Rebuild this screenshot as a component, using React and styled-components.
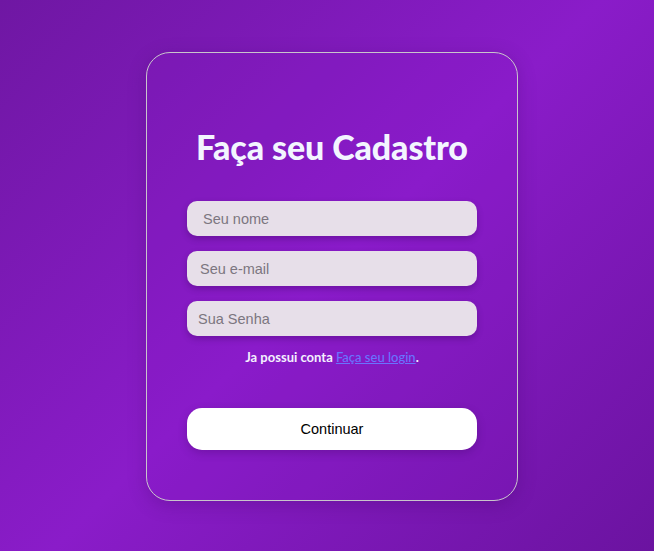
import React, { useState } from "react";
import styled, { createGlobalStyle } from "styled-components";

const GlobalStyle = createGlobalStyle`
  * {
    box-sizing: border-box;
  }
  html, body {
    margin: 0;
    padding: 0;
    height: 100%;
  }
  #root {
    height: 100%;
  }
`;

const Page = styled.div`
  width: 100%;
  min-height: 100vh;
  display: flex;
  justify-content: center;
  align-items: flex-start;
  padding: 52px 0 0 10px;
  background: linear-gradient(135deg, #6f17a3 0%, #8a1cc9 50%, #6b13a0 100%);
`;

const Card = styled.form`
  width: 372px;
  height: 449px;
  display: flex;
  flex-direction: column;
  align-items: center;
  padding: 74px 40px 0 40px;
  border: 1px solid #c9c4cc;
  border-radius: 24px;
  background: rgba(140, 30, 205, 0.15);
  box-shadow: 0 4px 18px rgba(60, 0, 90, 0.25);
`;

const Title = styled.h1`
  margin: 0 0 34px 0;
  font-family: "Lato", "Open Sans", sans-serif;
  font-weight: 900;
  font-size: 34px;
  line-height: 40px;
  letter-spacing: -0.1px;
  color: #f3f5ff;
  text-align: center;
`;

const Fields = styled.div`
  width: 100%;
  display: flex;
  flex-direction: column;
  gap: 15px;
`;

const Field = styled.input`
  width: 100%;
  height: 35px;
  padding: 0 0 0 ${(props) => props.$indent}px;
  border: none;
  outline: none;
  border-radius: 10px;
  background: #e7dfe9;
  box-shadow: 0 3px 6px rgba(50, 0, 80, 0.3);
  font-family: "Liberation Sans", Arial, sans-serif;
  font-size: 14.5px;
  color: #333;

  &::placeholder {
    color: #7c7680;
  }
`;

const Hint = styled.p`
  margin: 13px 0 0 0;
  font-family: "Lato", "Open Sans", sans-serif;
  font-weight: 700;
  font-size: 13px;
  line-height: 17px;
  color: #f4f0ff;
  text-align: center;
`;

const HintLink = styled.a`
  color: #6a73ff;
  font-weight: 500;
  text-decoration: underline;
`;

const SubmitButton = styled.button`
  width: 100%;
  height: 42px;
  margin-top: 42px;
  border: none;
  border-radius: 15px;
  background: #ffffff;
  box-shadow: 0 3px 8px rgba(50, 0, 80, 0.25);
  font-family: "Liberation Sans", Arial, sans-serif;
  font-size: 14.5px;
  color: #000000;
  cursor: pointer;
`;

const App = () => {
  const [name, setName] = useState("");
  const [email, setEmail] = useState("");
  const [password, setPassword] = useState("");

  const handle_submit = (e) => {
    e.preventDefault();
  };

  return (
    <>
      <GlobalStyle />
      <Page>
        <Card onSubmit={handle_submit}>
          <Title>Faça seu Cadastro</Title>
          <Fields>
            <Field
              type="text"
              $indent={16}
              placeholder="Seu nome"
              value={name}
              onChange={(e) => setName(e.target.value)}
            />
            <Field
              type="email"
              $indent={13}
              placeholder="Seu e-mail"
              value={email}
              onChange={(e) => setEmail(e.target.value)}
            />
            <Field
              type="password"
              $indent={11}
              placeholder="Sua Senha"
              value={password}
              onChange={(e) => setPassword(e.target.value)}
            />
          </Fields>
          <Hint>
            Ja possui conta <HintLink href="#">Faça seu login</HintLink>.
          </Hint>
          <SubmitButton type="submit">Continuar</SubmitButton>
        </Card>
      </Page>
    </>
  );
};

export default App;
